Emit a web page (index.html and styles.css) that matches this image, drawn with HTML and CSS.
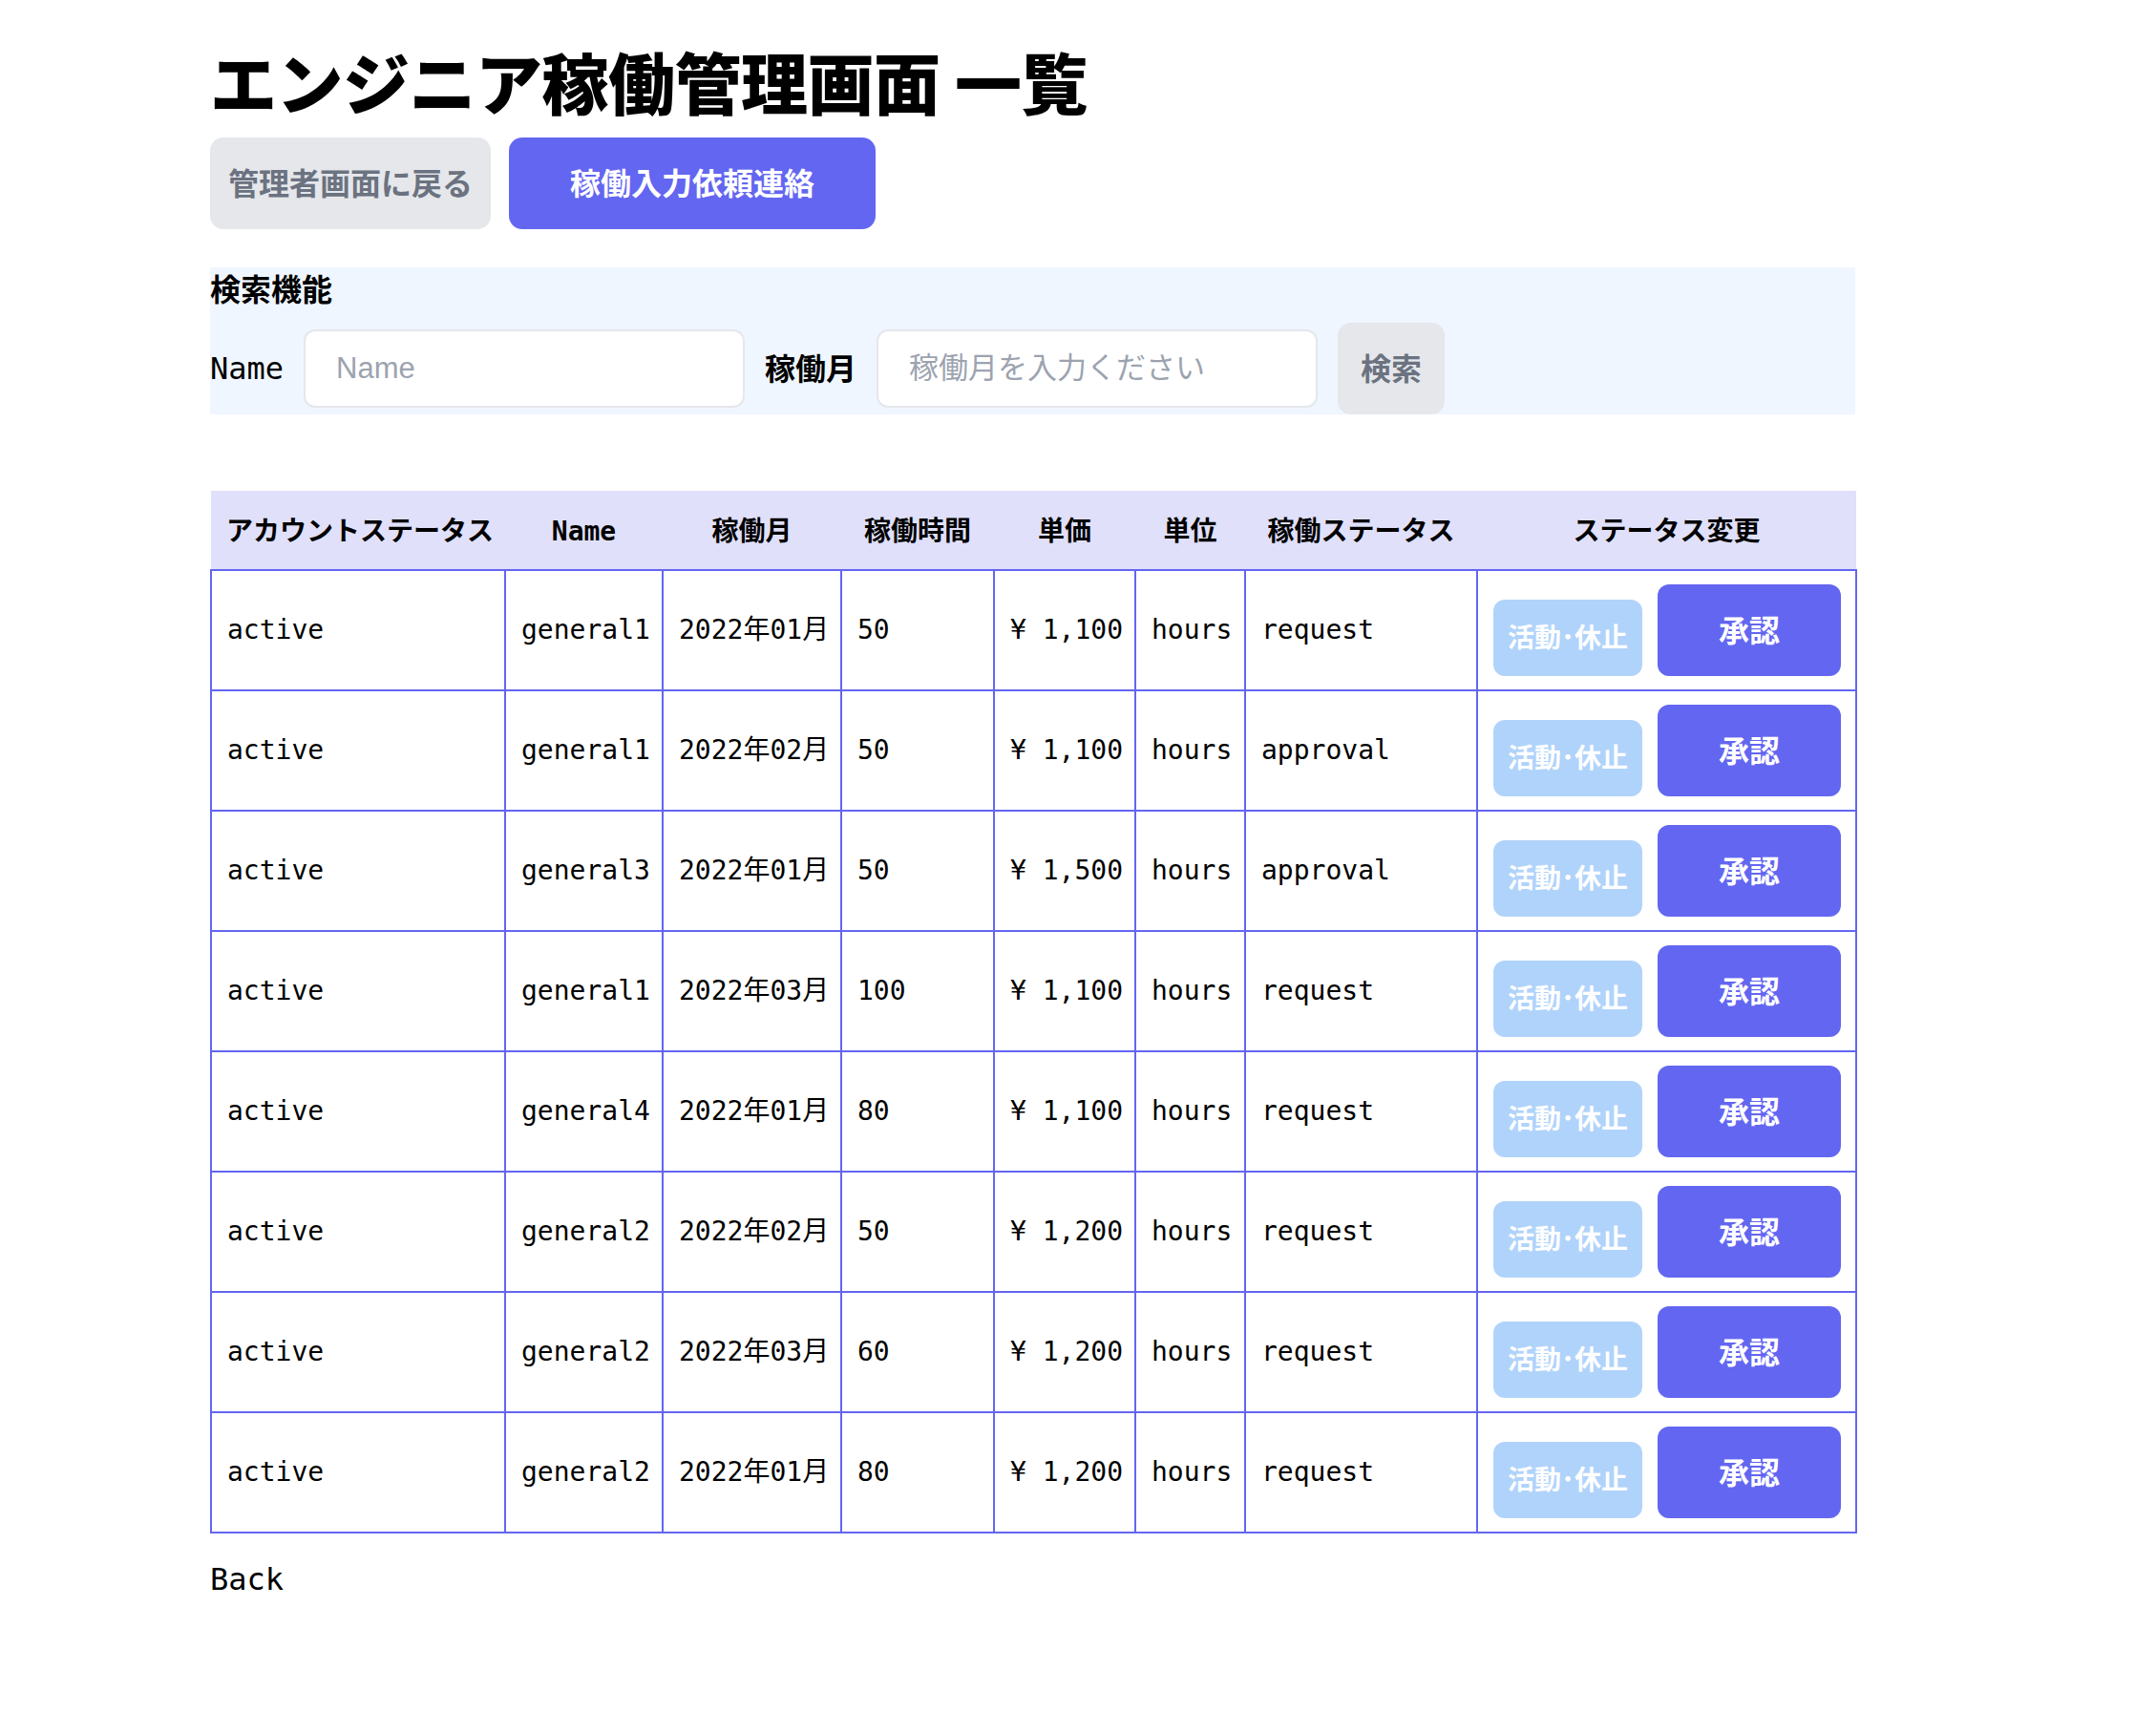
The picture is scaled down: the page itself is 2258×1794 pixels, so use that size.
FILE: index.html
```html
<!DOCTYPE html>
<html lang="ja">
<head>
<meta charset="utf-8">
<title>エンジニア稼働管理画面 一覧</title>
<link rel="stylesheet" href="styles.css">
</head>
<body>
<main class="page">
  <h1 class="title">エンジニア稼働管理画面 一覧</h1>
  <div class="actions">
    <button class="btn btn-gray btn-back">管理者画面に戻る</button>
    <button class="btn btn-primary btn-request">稼働入力依頼連絡</button>
  </div>

  <section class="search">
    <h2 class="search-title">検索機能</h2>
    <div class="search-row">
      <label class="search-label">Name</label>
      <input class="search-input" type="text" placeholder="Name">
      <label class="search-label search-label-jp">稼働月</label>
      <input class="search-input" type="text" placeholder="稼働月を入力ください">
      <button class="btn btn-gray btn-search">検索</button>
    </div>
  </section>

  <table class="work-table">
    <colgroup>
      <col class="c-account">
      <col class="c-name">
      <col class="c-month">
      <col class="c-hours">
      <col class="c-price">
      <col class="c-unit">
      <col class="c-status">
      <col class="c-change">
    </colgroup>
    <thead>
      <tr>
        <th>アカウントステータス</th>
        <th>Name</th>
        <th>稼働月</th>
        <th>稼働時間</th>
        <th>単価</th>
        <th>単位</th>
        <th>稼働ステータス</th>
        <th>ステータス変更</th>
      </tr>
    </thead>
    <tbody>
      <tr>
        <td>active</td><td>general1</td><td>2022年01月</td><td>50</td><td>¥ 1,100</td><td>hours</td><td>request</td>
        <td><div class="status-actions"><button class="btn-toggle">活動･休止</button><button class="btn-approve">承認</button></div></td>
      </tr>
      <tr>
        <td>active</td><td>general1</td><td>2022年02月</td><td>50</td><td>¥ 1,100</td><td>hours</td><td>approval</td>
        <td><div class="status-actions"><button class="btn-toggle">活動･休止</button><button class="btn-approve">承認</button></div></td>
      </tr>
      <tr>
        <td>active</td><td>general3</td><td>2022年01月</td><td>50</td><td>¥ 1,500</td><td>hours</td><td>approval</td>
        <td><div class="status-actions"><button class="btn-toggle">活動･休止</button><button class="btn-approve">承認</button></div></td>
      </tr>
      <tr>
        <td>active</td><td>general1</td><td>2022年03月</td><td>100</td><td>¥ 1,100</td><td>hours</td><td>request</td>
        <td><div class="status-actions"><button class="btn-toggle">活動･休止</button><button class="btn-approve">承認</button></div></td>
      </tr>
      <tr>
        <td>active</td><td>general4</td><td>2022年01月</td><td>80</td><td>¥ 1,100</td><td>hours</td><td>request</td>
        <td><div class="status-actions"><button class="btn-toggle">活動･休止</button><button class="btn-approve">承認</button></div></td>
      </tr>
      <tr>
        <td>active</td><td>general2</td><td>2022年02月</td><td>50</td><td>¥ 1,200</td><td>hours</td><td>request</td>
        <td><div class="status-actions"><button class="btn-toggle">活動･休止</button><button class="btn-approve">承認</button></div></td>
      </tr>
      <tr>
        <td>active</td><td>general2</td><td>2022年03月</td><td>60</td><td>¥ 1,200</td><td>hours</td><td>request</td>
        <td><div class="status-actions"><button class="btn-toggle">活動･休止</button><button class="btn-approve">承認</button></div></td>
      </tr>
      <tr>
        <td>active</td><td>general2</td><td>2022年01月</td><td>80</td><td>¥ 1,200</td><td>hours</td><td>request</td>
        <td><div class="status-actions"><button class="btn-toggle">活動･休止</button><button class="btn-approve">承認</button></div></td>
      </tr>
    </tbody>
  </table>

  <p class="back">Back</p>
</main>
</body>
</html>
```

FILE: styles.css
```css
* {
  box-sizing: border-box;
}

html,
body {
  margin: 0;
  padding: 0;
  background: #ffffff;
}

body {
  font-family: "DejaVu Sans Mono", "Noto Sans CJK JP", monospace;
  color: #000000;
}

.page {
  width: 1723px;
  margin-left: 220px;
  padding-top: 45px;
}

.title {
  margin: 0 0 19px;
  font-family: "Noto Sans CJK JP", sans-serif;
  font-size: 70px;
  line-height: 80px;
  font-weight: 900;
  letter-spacing: -0.5px;
  color: #000000;
}

.actions {
  display: flex;
  gap: 19px;
}

.btn {
  border: 0;
  border-radius: 14px;
  font-family: "Noto Sans CJK JP", sans-serif;
  font-weight: 700;
  font-size: 32px;
  line-height: 48px;
  padding: 22px 24px 26px;
  cursor: pointer;
}

.btn-gray {
  background: #e5e7eb;
  color: #6b7280;
}

.btn-primary {
  background: #6366f1;
  color: #ffffff;
}

.btn-back {
  padding-left: 19px;
  padding-right: 19px;
}

.btn-request {
  padding-left: 64px;
  padding-right: 64px;
}

.search {
  margin-top: 40px;
  background: #eff6ff;
}

.search-title {
  margin: 0;
  padding-bottom: 3px;
  font-family: "Noto Sans CJK JP", sans-serif;
  font-size: 32px;
  line-height: 42px;
  font-weight: 700;
}

.search-row {
  margin-top: 13px;
  display: flex;
  align-items: center;
  gap: 21px;
}

.search-label {
  font-size: 32px;
  line-height: 48px;
}

.search-label-jp {
  font-family: "Noto Sans CJK JP", sans-serif;
  font-weight: 700;
  padding-bottom: 4px;
}

.search-input {
  width: 462px;
  height: 82px;
  border: 2px solid #e5e7eb;
  border-radius: 12px;
  background: #ffffff;
  padding: 0 32px;
  font-family: "Liberation Sans", "Noto Sans CJK JP", sans-serif;
  font-size: 31px;
  color: #111827;
  outline: none;
}

.search-input::placeholder {
  color: #9ca3af;
}

.btn-search {
  padding-left: 24px;
  padding-right: 24px;
}

.work-table {
  margin-top: 80px;
  width: 1723px;
  border-collapse: collapse;
  table-layout: fixed;
}

.c-account { width: 308px; }
.c-name { width: 165px; }
.c-month { width: 187px; }
.c-hours { width: 160px; }
.c-price { width: 148px; }
.c-unit { width: 115px; }
.c-status { width: 243px; }
.c-change { width: 397px; }

.work-table th {
  background: #e0e0fb;
  font-size: 28px;
  line-height: 40px;
  font-weight: 700;
  padding: 23px 16px 19px;
  text-align: center;
  white-space: nowrap;
}

.work-table th:first-child {
  text-align: left;
}

.work-table td {
  border: 2px solid #6366f1;
  padding: 14px 16px;
  font-size: 28px;
  line-height: 40px;
  vertical-align: middle;
  white-space: nowrap;
}

.status-actions {
  display: flex;
  align-items: flex-end;
  gap: 16px;
}

.btn-toggle {
  border: 0;
  border-radius: 12px;
  background: #b0d3fb;
  color: #ffffff;
  font-family: "Noto Sans CJK JP", sans-serif;
  font-weight: 700;
  font-size: 28px;
  line-height: 40px;
  padding: 18px 15px 22px;
}

.btn-approve {
  border: 0;
  border-radius: 12px;
  background: #6366f1;
  color: #ffffff;
  font-family: "Noto Sans CJK JP", sans-serif;
  font-weight: 700;
  font-size: 32px;
  line-height: 48px;
  padding: 22px 64px 26px;
}

.back {
  margin: 24px 0 0;
  font-size: 32px;
  line-height: 48px;
}
```
